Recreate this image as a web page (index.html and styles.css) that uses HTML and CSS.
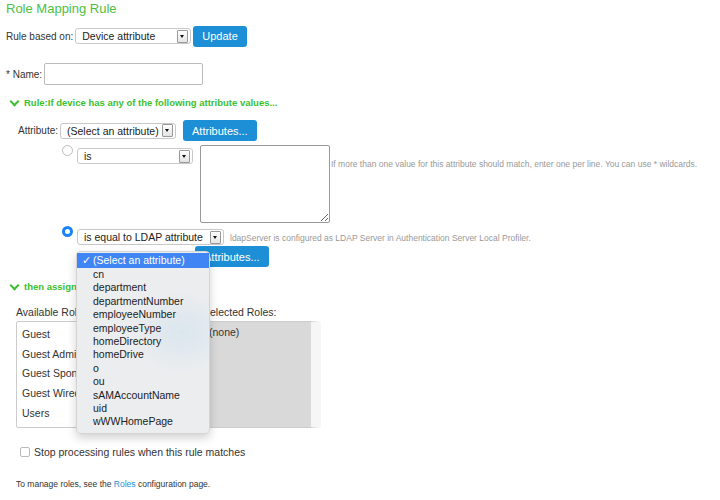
FILE: index.html
```html
<!DOCTYPE html>
<html lang="en">
<head>
    <meta charset="UTF-8">
    <title>Role Mapping Rule</title>
    <link rel="stylesheet" href="styles.css">
</head>
<body>
    <div class="page">
        <h1 class="title">Role Mapping Rule</h1>

        <div class="row rule-based">
            <span class="label">Rule based on:</span>
            <span class="select select-based"><span class="select-value">Device attribute</span><span class="select-arrow"></span></span>
            <button type="button" class="button">Update</button>
        </div>

        <div class="row name-row">
            <span class="label">* Name:</span>
            <input type="text" class="name-input">
        </div>

        <div class="section-head"><span class="chevron"></span>Rule:If device has any of the following attribute values...</div>

        <div class="row attr-row">
            <span class="label">Attribute:</span>
            <span class="select select-attr"><span class="select-value">(Select an attribute)</span><span class="select-arrow"></span></span>
            <button type="button" class="button">Attributes...</button>
        </div>

        <div class="cond cond-is">
            <span class="radio"></span>
            <span class="select select-op"><span class="select-value">is</span><span class="select-arrow"></span></span>
            <textarea class="values"></textarea>
            <span class="hint hint-values">If more than one value for this attribute should match, enter one per line. You can use * wildcards.</span>
        </div>

        <div class="cond cond-ldap">
            <span class="radio checked"></span>
            <span class="select select-ldap"><span class="select-value">is equal to LDAP attribute</span><span class="select-arrow"></span></span>
            <span class="hint">ldapServer is configured as LDAP Server in Authentication Server Local Profiler.</span>
        </div>

        <div class="ldap-button">
            <button type="button" class="button">Attributes...</button>
        </div>

        <div class="section-head assign-head"><span class="chevron"></span>then assign these roles:</div>

        <div class="roles">
            <div class="roles-col">
                <div class="roles-label">Available Roles:</div>
                <ul class="roles-list available">
                    <li>Guest</li>
                    <li>Guest Admin</li>
                    <li>Guest Sponsor</li>
                    <li>Guest Wired</li>
                    <li>Users</li>
                </ul>
            </div>
            <div class="roles-col">
                <div class="roles-label selected-label">Selected Roles:</div>
                <ul class="roles-list selected">
                    <li>(none)</li>
                </ul>
            </div>
        </div>

        <label class="stop-row"><span class="checkbox"></span>Stop processing rules when this rule matches</label>

        <p class="footnote">To manage roles, see the <a href="#">Roles</a> configuration page.</p>
    </div>

    <!-- open LDAP attribute menu -->
    <ul class="menu">
        <li class="active"><span class="tick">&#10003;</span>(Select an attribute)</li>
        <li>cn</li>
        <li>department</li>
        <li>departmentNumber</li>
        <li>employeeNumber</li>
        <li>employeeType</li>
        <li>homeDirectory</li>
        <li>homeDrive</li>
        <li>o</li>
        <li>ou</li>
        <li>sAMAccountName</li>
        <li>uid</li>
        <li>wWWHomePage</li>
    </ul>
</body>
</html>
```

FILE: styles.css
```css
body {
    font-family: 'Liberation Sans', Arial, sans-serif;
    font-size: 10px;
    color: #333;
    background-color: white;
    margin: 0;
    padding: 0;
    height: 500px;
    position: relative;
    overflow: hidden;
}
.page {
    padding: 0 6px;
}
.title {
    font-size: 13px;
    font-weight: normal;
    color: #4cbf43;
    margin: 0;
    padding-top: 1px;
    height: 22px;
}
.row {
    display: flex;
    align-items: center;
}
.label {
    margin-right: 2px;
}
.button {
    font-family: 'Liberation Sans', Arial, sans-serif;
    font-size: 11px;
    background-color: #1c8fd6;
    color: white;
    border: none;
    border-radius: 3px;
    padding: 0 9px;
    height: 21px;
    cursor: pointer;
}
/* Select boxes */
.select {
    display: inline-flex;
    align-items: center;
    justify-content: space-between;
    height: 16px;
    border: 1px solid #c8c8c8;
    border-radius: 3px;
    background-color: white;
    box-sizing: border-box;
    padding-left: 6px;
    font-size: 10.5px;
    color: #222;
}
.select-arrow {
    width: 9px;
    height: 11px;
    margin-right: 2px;
    border: 1px solid #999;
    border-radius: 1px;
    background: linear-gradient(#fff, #e4e4e4);
    position: relative;
}
.select-arrow::after {
    content: "";
    position: absolute;
    left: 2px;
    top: 4px;
    border-left: 2.5px solid transparent;
    border-right: 2.5px solid transparent;
    border-top: 3px solid #111;
}
.rule-based {
    height: 24px;
    margin-top: 1px;
}
.select-based {
    width: 116px;
    margin-right: 2px;
}
.name-row {
    margin-top: 15px;
    height: 22px;
}
.name-input {
    width: 159px;
    height: 22px;
    box-sizing: border-box;
    border: 1px solid #bbb;
    border-radius: 2px;
    margin-left: 0;
}
.section-head {
    font-size: 9.5px;
    font-weight: bold;
    color: #3cbf30;
    margin-top: 12px;
    padding-left: 4px;
    display: flex;
    align-items: center;
}
.chevron {
    width: 5px;
    height: 5px;
    border-right: 2px solid #3cbf30;
    border-bottom: 2px solid #3cbf30;
    transform: rotate(45deg);
    margin: -3px 6px 0 1px;
}
.attr-row {
    padding-left: 12px;
    margin-top: 12px;
    height: 21px;
}
.select-attr {
    width: 116px;
    margin-right: 7px;
}
.cond {
    display: flex;
    align-items: flex-start;
    padding-left: 56px;
}
.radio {
    width: 11px;
    height: 11px;
    box-sizing: border-box;
    border: 1px solid #bbb;
    border-radius: 50%;
    background-color: white;
    margin-right: 4px;
}
.radio.checked {
    border: 3.5px solid #1a83fb;
}
.cond-is {
    margin-top: 4px;
}
.select-op {
    width: 116px;
    margin-top: 3px;
    margin-right: 7px;
}
.values {
    width: 130px;
    height: 78px;
    box-sizing: border-box;
    border: 1px solid #999;
    border-radius: 2px;
    margin: 0;
    resize: both;
}
.hint {
    font-size: 8.5px;
    color: #999;
    margin-left: 6px;
    margin-top: 7px;
}
.hint-values {
    margin-left: 1px;
    margin-top: 14px;
}
.cond-ldap {
    margin-top: 3px;
}
.select-ldap {
    width: 147px;
    margin-top: 3px;
}
.ldap-button {
    padding-left: 189px;
    margin-top: 1px;
}
.assign-head {
    margin-top: 14px;
}
/* Roles */
.roles {
    display: flex;
    margin-top: 14px;
    padding-left: 10px;
    font-size: 10.5px;
}
.roles-col {
    display: flex;
    flex-direction: column;
}
.roles-label {
    margin-bottom: 3px;
}
.selected-label {
    padding-left: 3px;
}
.roles-list {
    list-style: none;
    margin: 0;
    padding: 3px 0 0 5px;
    height: 107px;
    box-sizing: border-box;
    border: 1px solid #ccc;
    border-radius: 2px;
}
.roles-list li {
    height: 19.7px;
    line-height: 19.7px;
}
.available {
    width: 177px;
    margin-right: 7px;
}
.selected {
    width: 121px;
    background-color: #d9d9d9;
    border-right: 10px solid #f6f6f6;
    padding: 1px 0 0 8px;
}
.stop-row {
    display: flex;
    align-items: center;
    margin-top: 18px;
    padding-left: 14px;
    font-size: 10.5px;
}
.checkbox {
    width: 10px;
    height: 10px;
    border: 1px solid #bbb;
    border-radius: 2px;
    box-sizing: border-box;
    margin-right: 4px;
}
.footnote {
    font-size: 8.5px;
    margin: 21px 0 0 10px;
}
.footnote a {
    color: #1c8fd6;
    text-decoration: none;
}
/* Open dropdown menu */
.menu {
    position: absolute;
    left: 76px;
    top: 251px;
    width: 132px;
    margin: 0;
    padding: 1px 0 4px;
    list-style: none;
    font-size: 10.5px;
    color: #222;
    background: radial-gradient(ellipse 50px 40px at 105px 80px, #dae6ee, #ebedef);
    border: 1px solid #d4d4d4;
    border-radius: 4px;
    box-shadow: 0 4px 10px rgba(0, 0, 0, 0.18);
}
.menu li {
    height: 13.4px;
    line-height: 13.4px;
    padding-left: 16px;
}
.menu li.active {
    background-color: #3f86f4;
    color: white;
    height: 15px;
    line-height: 15px;
    position: relative;
}
.tick {
    position: absolute;
    left: 5px;
}
```
